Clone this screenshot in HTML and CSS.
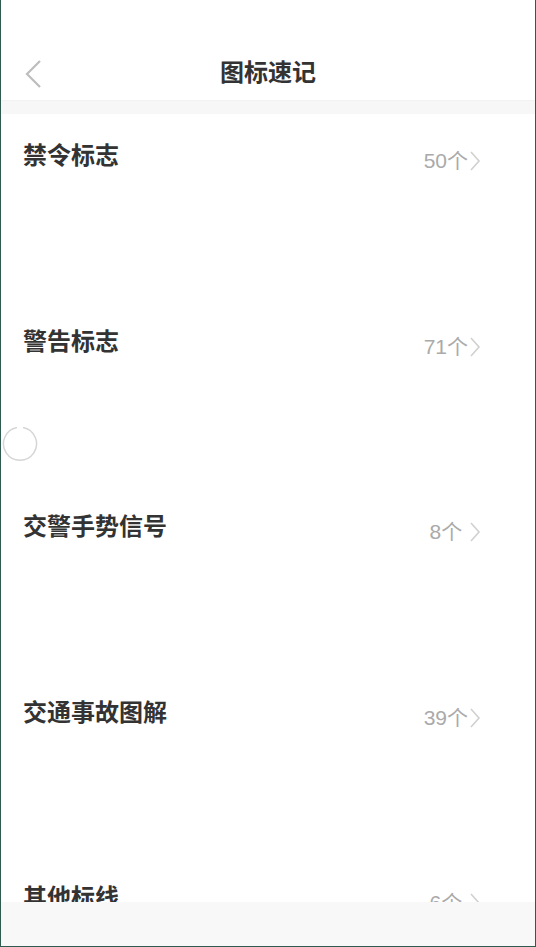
FILE: index.html
```html
<!DOCTYPE html>
<html lang="zh-CN">
<head>
	<meta charset="UTF-8">
	<meta name="viewport" content="width=device-width, initial-scale=1.0">
	<title>图标速记</title>
	<link rel="stylesheet" href="styles.css">
</head>
<body>
	<div class="screen">
		<div class="status-bar"></div>
		<div class="nav-bar">
			<span class="back">
				<svg width="20" height="30" viewBox="0 0 20 30"><polyline points="16,2 3,15 16,28" fill="none" stroke="#bdbdbd" stroke-width="2.2"/></svg>
			</span>
			<h1 class="nav-title">图标速记</h1>
		</div>
		<div class="divider"></div>
		<ul class="sign-list">
			<li class="sign-row">
				<span class="sign-name">禁令标志</span>
				<span class="sign-count">50个<svg class="arrow" width="12" height="22" viewBox="0 0 12 22"><polyline points="2,2 10,11 2,20" fill="none" stroke="#d0d0d0" stroke-width="1.6"/></svg></span>
			</li>
			<li class="sign-row">
				<span class="sign-name">警告标志</span>
				<span class="sign-count">71个<svg class="arrow" width="12" height="22" viewBox="0 0 12 22"><polyline points="2,2 10,11 2,20" fill="none" stroke="#d0d0d0" stroke-width="1.6"/></svg></span>
			</li>
			<li class="sign-row">
				<span class="sign-name">交警手势信号</span>
				<span class="sign-count">8个 <svg class="arrow" width="12" height="22" viewBox="0 0 12 22"><polyline points="2,2 10,11 2,20" fill="none" stroke="#d0d0d0" stroke-width="1.6"/></svg></span>
			</li>
			<li class="sign-row">
				<span class="sign-name">交通事故图解</span>
				<span class="sign-count">39个<svg class="arrow" width="12" height="22" viewBox="0 0 12 22"><polyline points="2,2 10,11 2,20" fill="none" stroke="#d0d0d0" stroke-width="1.6"/></svg></span>
			</li>
			<li class="sign-row">
				<span class="sign-name">其他标线</span>
				<span class="sign-count">6个 <svg class="arrow" width="12" height="22" viewBox="0 0 12 22"><polyline points="2,2 10,11 2,20" fill="none" stroke="#d0d0d0" stroke-width="1.6"/></svg></span>
			</li>
		</ul>
		<div class="spinner">
			<svg width="36" height="36" viewBox="0 0 36 36"><path d="M21 1.5 A16.5 16.5 0 1 1 15 1.5" fill="none" stroke="#d6d6d6" stroke-width="1.5"/></svg>
		</div>
		<div class="bottom-bar"></div>
	</div>
</body>
</html>
```

FILE: styles.css
```css
body {
	margin: 0;
	padding: 0;
	background: #fff;
	font-family: "Liberation Sans", "Noto Sans CJK SC", sans-serif;
}
.screen {
	position: relative;
	width: 536px;
	height: 947px;
	box-sizing: border-box;
	border-left: 1px solid #2e5a4f;
	border-right: 1px solid #2e5a4f;
	border-bottom: 1px solid #2e5a4f;
	background: #fff;
	overflow: hidden;
}
.status-bar {
	height: 50px;
}
.nav-bar {
	position: relative;
	height: 50px;
	display: flex;
	align-items: center;
	justify-content: center;
}
.back {
	position: absolute;
	left: 23px;
	top: 9px;
	display: flex;
}
.nav-title {
	margin: 0;
	font-size: 24px;
	font-weight: bold;
	color: #333;
	line-height: 30px;
	margin-top: -4px;
}
.divider {
	height: 14px;
	background: #f7f7f7;
	border-top: 1px solid #f2f2f2;
	box-sizing: border-box;
}
.sign-list {
	list-style: none;
	margin: 0;
	padding: 0;
}
.sign-row {
	height: 185.5px;
	box-sizing: border-box;
	padding: 27px 54px 0 22px;
	display: flex;
	justify-content: space-between;
	align-items: flex-start;
}
.sign-name {
	font-size: 24px;
	font-weight: bold;
	color: #333;
	line-height: 30px;
}
.sign-count {
	display: flex;
	align-items: center;
	margin-top: 5px;
	font-size: 21px;
	color: #aaa;
	line-height: 30px;
	white-space: pre;
}
.arrow {
	margin-left: 1px;
}
.spinner {
	position: absolute;
	left: 1px;
	top: 426px;
	display: flex;
}
.bottom-bar {
	position: absolute;
	left: 0;
	right: 0;
	bottom: 0;
	height: 44px;
	background: #f8f8f8;
}
```
